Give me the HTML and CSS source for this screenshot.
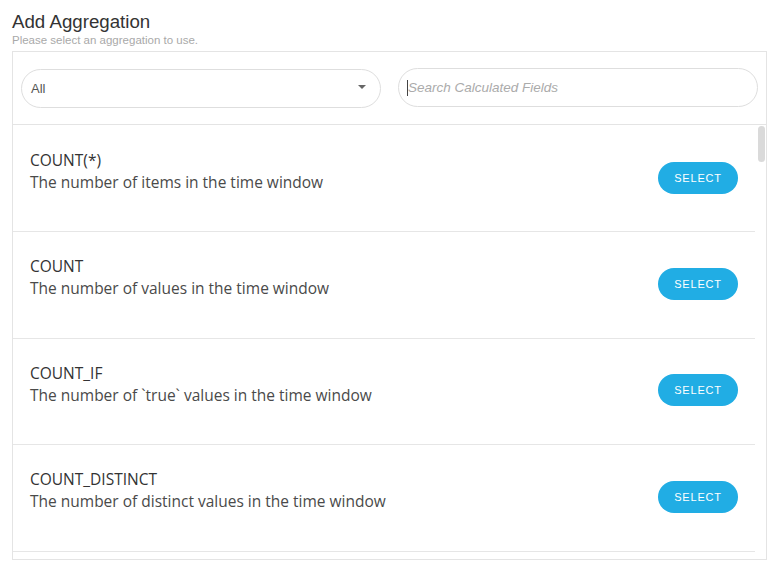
FILE: index.html
```html
<!DOCTYPE html>
<html>
<head>
<meta charset="utf-8">
<link rel="stylesheet" href="styles.css">
</head>
<body>
<div class="page">
  <h1 class="title">Add Aggregation</h1>
  <p class="subtitle">Please select an aggregation to use.</p>
  <div class="panel">
    <div class="filters">
      <div class="pill select">
        <span class="select-value">All</span>
        <span class="caret"></span>
      </div>
      <div class="pill search">
        <span class="cursor"></span>
        <span class="placeholder">Search Calculated Fields</span>
      </div>
    </div>
    <div class="list">
      <div class="rows">
        <div class="row">
          <div class="info">
            <div class="name">COUNT(*)</div>
            <div class="desc">The number of items in the time window</div>
          </div>
          <button class="btn">SELECT</button>
        </div>
        <div class="row">
          <div class="info">
            <div class="name">COUNT</div>
            <div class="desc">The number of values in the time window</div>
          </div>
          <button class="btn">SELECT</button>
        </div>
        <div class="row">
          <div class="info">
            <div class="name">COUNT_IF</div>
            <div class="desc">The number of `true` values in the time window</div>
          </div>
          <button class="btn">SELECT</button>
        </div>
        <div class="row">
          <div class="info">
            <div class="name">COUNT_DISTINCT</div>
            <div class="desc">The number of distinct values in the time window</div>
          </div>
          <button class="btn">SELECT</button>
        </div>
      </div>
      <div class="track"><div class="thumb"></div></div>
    </div>
  </div>
</div>
</body>
</html>
```
FILE: styles.css
```css
* { box-sizing: border-box; }
html, body { margin: 0; padding: 0; background: #fff; }
body { font-family: "Liberation Sans", Arial, sans-serif; }
.page { padding: 11px 0 0 12px; width: 767px; }
.title {
  margin: 0;
  font-size: 18.7px;
  line-height: 22px;
  font-weight: normal;
  color: #333;
}
.subtitle {
  margin: 1px 0 0;
  font-size: 11.5px;
  line-height: 13px;
  color: #a9a9a9;
}
.panel {
  margin-top: 4px;
  width: 755px;
  height: 509px;
  border: 1px solid #e4e4e4;
  display: flex;
  flex-direction: column;
  overflow: hidden;
}
.filters {
  display: flex;
  gap: 17px;
  padding: 17px 8px 16px;
  border-bottom: 1px solid #e4e4e4;
}
.pill {
  flex: none;
  width: 360px;
  height: 39px;
  border: 1px solid #dedede;
  border-radius: 20px;
  display: flex;
  align-items: center;
  font-size: 13px;
}
.select { padding: 0 14px 0 9px; justify-content: space-between; }
.select-value { color: #555; }
.caret {
  width: 0; height: 0;
  border-left: 4px solid transparent;
  border-right: 4px solid transparent;
  border-top: 4px solid #666;
  margin-top: -3px;
}
.search { padding-left: 8px; margin-top: -1px; }
.cursor { width: 1px; height: 16px; background: #444; }
.placeholder { color: #ababab; font-style: italic; font-size: 13.5px; }
.list { flex: 1; display: flex; overflow: hidden; }
.rows { width: 742px; padding-top: 1px; }
.row {
  height: 106.4px;
  border-bottom: 1px solid #e6e6e6;
  display: flex;
  align-items: center;
  justify-content: space-between;
  padding: 0 17px 0 17px;
}
.info { align-self: flex-start; padding-top: 23px; font-family: "Open Sans", sans-serif; }
.name { font-size: 15.5px; line-height: 22px; color: #333; }
.desc { font-size: 15.5px; line-height: 22px; color: #4a4a4a; }
.btn {
  width: 80px;
  height: 32px;
  border: none;
  border-radius: 16px;
  background: #21ade4;
  color: #fff;
  font-family: "Liberation Sans", Arial, sans-serif;
  font-size: 11px;
  letter-spacing: 0.8px;
  padding: 0;
  margin-top: -2px;
}
.track { width: 11px; padding: 1px 0 0 3px; }
.thumb { width: 7px; height: 36px; border-radius: 4px; background: #dadada; }
```
